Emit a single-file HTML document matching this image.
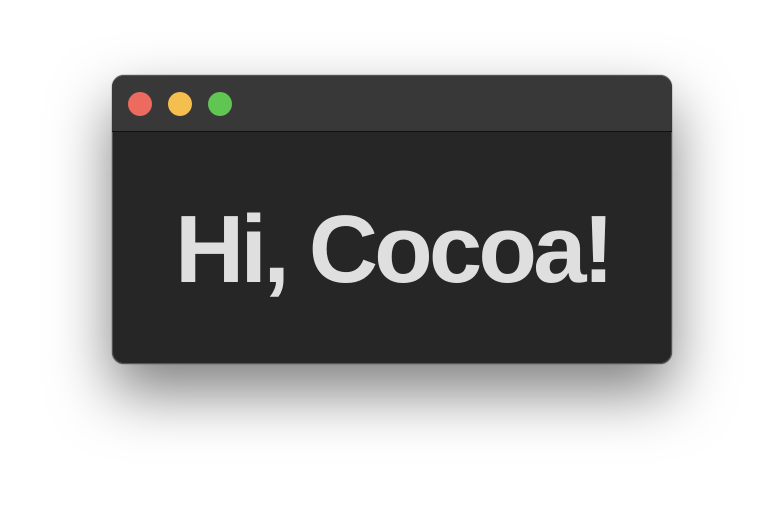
<!DOCTYPE html>
<html><head><style>
html,body{margin:0;padding:0;width:784px;height:512px;background:#fff;overflow:hidden}
.win{position:absolute;left:112px;top:75px;width:560px;height:289px;border-radius:12px;background:#262626;box-shadow:0 0 0 1px #555 inset,0 28px 60px rgba(0,0,0,.5),0 0 1px rgba(0,0,0,.8);overflow:hidden}
.bar{position:absolute;left:0;top:0;width:560px;height:56px;background:#383838;border-bottom:1px solid #111;border-radius:12px 12px 0 0;box-shadow:inset 0 1px 0 #555}
.l{position:absolute;top:17px;width:24px;height:24px;border-radius:50%}
.t{position:absolute;left:63px;top:127px;font:bold 96px/96px "Liberation Sans",sans-serif;color:#dfdfdf;letter-spacing:-3.9px;white-space:nowrap}
</style></head><body>
<div class="win">
<div class="bar">
<div class="l" style="left:16px;background:#ec6a5e"></div>
<div class="l" style="left:56px;background:#f4bf4f"></div>
<div class="l" style="left:96px;background:#61c554"></div>
</div>
<div class="t">Hi, Cocoa!</div>
</div>
</body></html>
